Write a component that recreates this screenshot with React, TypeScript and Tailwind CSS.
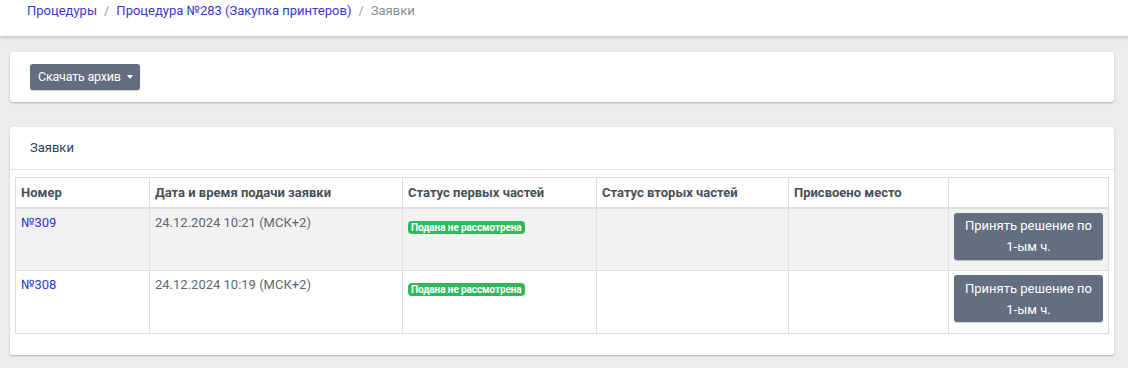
import React from "react";

type Row = {
  id: number;
  date: string;
};

const rows: Array<Row> = [
  { id: 309, date: "24.12.2024 10:21 (МСК+2)" },
  { id: 308, date: "24.12.2024 10:19 (МСК+2)" },
];

const headers = [
  "Номер",
  "Дата и время подачи заявки",
  "Статус первых частей",
  "Статус вторых частей",
  "Присвоено место",
  "",
];

const widths = ["w-[134px]", "w-[253px]", "w-[194px]", "w-[192px]", "w-[160px]", ""];

function App() {
  return (
    <div
      className="min-h-[368px] bg-[#ebecee] text-[13px] text-[#495057]"
      style={{ fontFamily: 'Roboto, "Noto Sans", sans-serif' }}
    >
      <div className="h-[36px] bg-white shadow-[0_2px_3px_rgba(0,0,0,0.15)] px-[27px] pt-0 flex items-start">
        <nav className="flex items-center gap-[7px] text-[13px] leading-[22px]">
          <a className="text-[#4036d1]">Процедуры</a>
          <span className="text-[#9aa0a6]">/</span>
          <a className="text-[#4036d1]">Процедура №283 (Закупка принтеров)</a>
          <span className="text-[#9aa0a6]">/</span>
          <span className="text-[#868e96]">Заявки</span>
        </nav>
      </div>

      <div className="px-[10px] pr-[14px] pt-[16px]">
        <div className="bg-white rounded-[3px] shadow-[0_1px_2px_rgba(0,0,0,0.25)] h-[50px] px-[20px] flex items-center">
          <button className="h-[26px] pl-[8px] pr-[7px] rounded-[3px] bg-[#636d80] text-white text-[12.5px] tracking-[-0.2px] flex items-center gap-[6px] shadow-[0_1px_1px_rgba(0,0,0,0.2)]">
            Скачать архив
            <span className="w-0 h-0 border-l-[3px] border-r-[3px] border-t-[4px] border-l-transparent border-r-transparent border-t-white" />
          </button>
        </div>

        <div className="mt-[25px] bg-white rounded-[3px] shadow-[0_1px_2px_rgba(0,0,0,0.25)]">
          <div className="h-[43px] border-b border-[#e3e5e8] px-[20px] flex items-center text-[#2d3f5c]">
            Заявки
          </div>
          <div className="px-[5px] pt-[7px] pb-[21px]">
            <table className="w-full border-collapse text-[13px]">
              <thead>
                <tr>
                  {headers.map((h, i) => (
                    <th
                      key={`h-${i}`}
                      className={`${widths[i]} h-[30px] border border-[#dcdee2] border-b-2 px-[5px] text-left align-middle font-bold text-[#495057]`}
                    >
                      {h}
                    </th>
                  ))}
                </tr>
              </thead>
              <tbody>
                {rows.map((r, idx) => (
                  <tr key={r.id} className={idx === 0 ? "bg-[#f2f2f2]" : "bg-white"}>
                    <td className="h-[63px] border border-[#dcdee2] px-[5px] pt-[4px] align-top text-[#3b2fd6]">
                      №{r.id}
                    </td>
                    <td className="border border-[#dcdee2] px-[5px] pt-[4px] align-top text-[#5f6670]">
                      {r.date}
                    </td>
                    <td className="border border-[#dcdee2] px-[5px] pt-[8px] align-top">
                      <span className="inline-block rounded-[4px] bg-[#2fb95a] px-[3px] text-[10px] leading-[13px] font-bold text-white tracking-[-0.1px]">
                        Подана не рассмотрена
                      </span>
                    </td>
                    <td className="border border-[#dcdee2]" />
                    <td className="border border-[#dcdee2]" />
                    <td className="border border-[#dcdee2] px-[5px] pt-[4px] pb-[10px] align-top">
                      <button className="w-full h-[47px] rounded-[3px] bg-[#636e81] text-white text-[13px] leading-[21px] px-[6px] shadow-[0_1px_1px_rgba(0,0,0,0.2)]">
                        Принять решение по
                        <br />
                        1-ым ч.
                      </button>
                    </td>
                  </tr>
                ))}
              </tbody>
            </table>
          </div>
        </div>
      </div>
    </div>
  );
}

export default App;
